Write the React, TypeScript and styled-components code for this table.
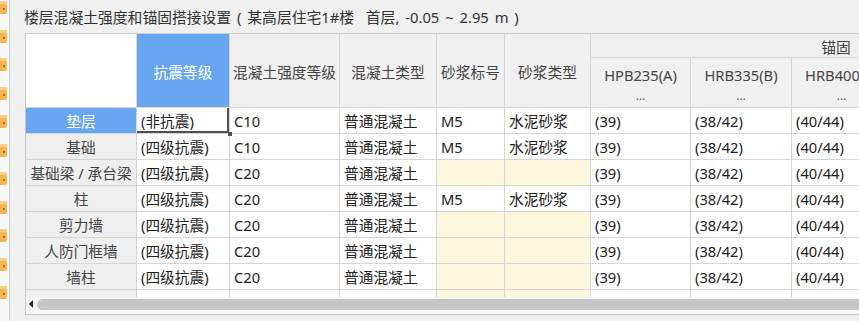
import React from "react";
import styled, { createGlobalStyle, css } from "styled-components";

const GlobalStyle = createGlobalStyle`
  html, body {
    margin: 0;
    padding: 0;
    background: #f0f0f0;
  }
  body {
    font-family: "Noto Sans", "Noto Sans CJK SC", sans-serif;
    overflow: hidden;
  }
`;

const COLS = [111, 93, 110, 97, 68, 86, 100, 101, 100, 100, 90];

const Screen = styled.div`
  display: flex;
  width: 859px;
  height: 321px;
  overflow: hidden;
  background: #f0f0f0;
`;

const SideStrip = styled.div`
  flex: none;
  width: 9px;
  display: flex;
  flex-direction: column;
  gap: 15.5px;
  padding-top: 1px;
  background: #f8f8f8;
  border-right: 1px solid #cfcfcf;
`;

const SideIcon = styled.div`
  position: relative;
  width: 7px;
  height: 13px;
  background: #f5b651;
  border-radius: 0 2px 2px 0;
  box-shadow: inset 0 3px 0 #f9cf85;

  &::after {
    content: "";
    position: absolute;
    left: 3px;
    top: 7px;
    width: 2px;
    height: 2px;
    background: #b07020;
  }
`;

const Main = styled.div`
  flex: 1;
  min-width: 0;
  display: flex;
  flex-direction: column;
  padding: 7px 0 0 14px;
  overflow: hidden;
`;

const Title = styled.div`
  height: 20px;
  line-height: 20px;
  font-size: 14.8px;
  word-spacing: 2px;
  color: #333;
  white-space: nowrap;
`;

const GridBox = styled.div`
  margin: 6px 0 0 1px;
  width: 1000px;
  height: 280px;
  border-left: 1px solid #c8c8c8;
  border-top: 1px solid #d0d0d0;
  border-bottom: 1px solid #c8c8c8;
  display: flex;
  flex-direction: column;
  background: #f7f7f7;
`;

const Viewport = styled.div`
  height: 263px;
  overflow: hidden;
  background: #fff;
`;

const Grid = styled.div`
  display: grid;
  grid-template-columns: ${COLS.map((c) => c + "px").join(" ")};
  grid-template-rows: 24px 50px repeat(8, 26px);
  font-size: 14.7px;
`;

const cellBase = css`
  box-sizing: border-box;
  border-right: 1px solid #d6d6d6;
  border-bottom: 1px solid #d6d6d6;
  white-space: nowrap;
  overflow: hidden;
`;

const HeadCell = styled.div<{ $active?: boolean; $rows?: number; $span?: number }>`
  ${cellBase};
  grid-row: span ${(p) => p.$rows ?? 1};
  grid-column: span ${(p) => p.$span ?? 1};
  display: flex;
  flex-direction: column;
  align-items: center;
  justify-content: center;
  padding-top: 2px;
  background: ${(p) => (p.$active ? "#68a7ef" : "#f0f0f0")};
  color: ${(p) => (p.$active ? "#fff" : "#444")};
  line-height: 24px;
`;

const Corner = styled.div`
  ${cellBase};
  grid-row: span 2;
  background: #fff;
`;

const Dots = styled.span`
  font-size: 12px;
  color: #666;
  line-height: 18px;
`;

const RowHead = styled.div<{ $active?: boolean }>`
  ${cellBase};
  display: flex;
  align-items: center;
  justify-content: center;
  background: ${(p) => (p.$active ? "#68a7ef" : "#efefef")};
  color: ${(p) => (p.$active ? "#fff" : "#444")};
`;

const Cell = styled.div<{ $empty?: boolean; $focus?: boolean }>`
  ${cellBase};
  position: relative;
  display: flex;
  align-items: center;
  padding-left: 4px;
  color: #222;
  background: ${(p) => (p.$empty ? "#fcf7dc" : "#fff")};
  overflow: visible;
  ${(p) =>
    p.$focus &&
    css`
      box-shadow: inset -2px -2px 0 #505050;
      &::after {
        content: "";
        position: absolute;
        right: -3px;
        bottom: -3px;
        width: 4px;
        height: 4px;
        background: #505050;
        z-index: 2;
      }
    `}
`;

const ScrollBar = styled.div`
  height: 14px;
  display: flex;
  align-items: center;
  padding-left: 3px;
  gap: 4px;
`;

const ArrowLeft = styled.div`
  width: 0;
  height: 0;
  border-top: 4px solid transparent;
  border-bottom: 4px solid transparent;
  border-right: 4px solid #222;
`;

const Thumb = styled.div`
  flex: 1;
  height: 11px;
  border-radius: 6px;
  background: #c6c6c6;
`;

type Row = {
  name: string;
  grade: string;
  concrete: string;
  kind: string;
  mortar: string;
  mortarKind: string;
};

const rows: Row[] = [
  { name: "垫层", grade: "(非抗震)", concrete: "C10", kind: "普通混凝土", mortar: "M5", mortarKind: "水泥砂浆" },
  { name: "基础", grade: "(四级抗震)", concrete: "C10", kind: "普通混凝土", mortar: "M5", mortarKind: "水泥砂浆" },
  { name: "基础梁 / 承台梁", grade: "(四级抗震)", concrete: "C20", kind: "普通混凝土", mortar: "", mortarKind: "" },
  { name: "柱", grade: "(四级抗震)", concrete: "C20", kind: "普通混凝土", mortar: "M5", mortarKind: "水泥砂浆" },
  { name: "剪力墙", grade: "(四级抗震)", concrete: "C20", kind: "普通混凝土", mortar: "", mortarKind: "" },
  { name: "人防门框墙", grade: "(四级抗震)", concrete: "C20", kind: "普通混凝土", mortar: "", mortarKind: "" },
  { name: "墙柱", grade: "(四级抗震)", concrete: "C20", kind: "普通混凝土", mortar: "", mortarKind: "" },
  { name: "", grade: "", concrete: "", kind: "", mortar: "", mortarKind: "" },
];

const anchors = ["(39)", "(38/42)", "(40/44)", "(40/44)", "(40/44)"];
const steelCols = ["HPB235(A)", "HRB335(B)", "HRB400(C)", "RRB400(D)", "冷轧带肋"];

export default function App() {
  return (
    <>
      <GlobalStyle />
      <Screen>
        <SideStrip>
          {Array.from({ length: 11 }).map((_, i) => (
            <SideIcon key={i} />
          ))}
        </SideStrip>
        <Main>
          <Title>楼层混凝土强度和锚固搭接设置 ( 某高层住宅1#楼&nbsp;&nbsp;首层, -0.05 ~ 2.95 m )</Title>
          <GridBox>
            <Viewport>
              <Grid>
                <Corner />
                <HeadCell $rows={2} $active>抗震等级</HeadCell>
                <HeadCell $rows={2}>混凝土强度等级</HeadCell>
                <HeadCell $rows={2}>混凝土类型</HeadCell>
                <HeadCell $rows={2}>砂浆标号</HeadCell>
                <HeadCell $rows={2}>砂浆类型</HeadCell>
                <HeadCell $span={5}>锚固</HeadCell>
                {steelCols.map((s) => (
                  <HeadCell key={s}>
                    <span>{s}</span>
                    <Dots>...</Dots>
                  </HeadCell>
                ))}
                {rows.map((r, i) => {
                  const blank = r.name === "";
                  return (
                    <React.Fragment key={i}>
                      <RowHead $active={i === 0}>{r.name}</RowHead>
                      <Cell $focus={i === 0}>{r.grade}</Cell>
                      <Cell>{r.concrete}</Cell>
                      <Cell>{r.kind}</Cell>
                      <Cell $empty={!r.mortar}>{r.mortar}</Cell>
                      <Cell $empty={!r.mortarKind}>{r.mortarKind}</Cell>
                      {anchors.map((a, j) => (
                        <Cell key={j}>{blank ? "" : a}</Cell>
                      ))}
                    </React.Fragment>
                  );
                })}
              </Grid>
            </Viewport>
            <ScrollBar>
              <ArrowLeft />
              <Thumb />
            </ScrollBar>
          </GridBox>
        </Main>
      </Screen>
    </>
  );
}
